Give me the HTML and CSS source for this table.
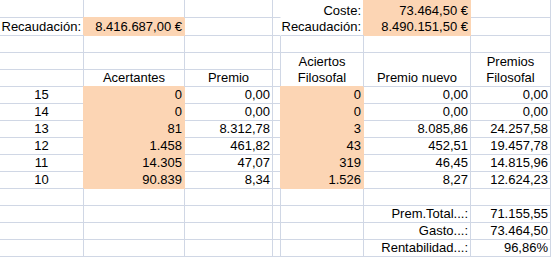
FILE: index.html
```html
<!DOCTYPE html>
<html lang="es">
<head>
<meta charset="utf-8">
<title>Filosofal</title>
<link rel="stylesheet" href="styles.css">
</head>
<body>
<div class="sheet">
  <!-- row 0 -->
  <div class="c top"></div>
  <div class="c top"></div>
  <div class="c top"></div>
  <div class="c top nr"></div>
  <div class="c top r wf nb">Coste:</div>
  <div class="c top r fill">73.464,50 €</div>
  <div class="c top"></div>
  <!-- row 1 -->
  <div class="c r">Recaudación:</div>
  <div class="c r fill">8.416.687,00 €</div>
  <div class="c"></div>
  <div class="c nr"></div>
  <div class="c r wf">Recaudación:</div>
  <div class="c r fill">8.490.151,50 €</div>
  <div class="c"></div>
  <!-- row 2 -->
  <div class="c"></div><div class="c"></div><div class="c"></div><div class="c"></div><div class="c"></div><div class="c"></div><div class="c"></div>
  <!-- row 3/4 -->
  <div class="c"></div>
  <div class="c"></div>
  <div class="c"></div>
  <div class="c"></div>
  <div class="c m span2">Aciertos<br>Filosofal</div>
  <div class="c m span2">Premio nuevo</div>
  <div class="c m span2">Premios<br>Filosofal</div>
  <div class="c"></div>
  <div class="c m">Acertantes</div>
  <div class="c m">Premio</div>
  <div class="c"></div>
  <!-- data rows -->
  <div class="c m">15</div><div class="c r fill">0</div><div class="c r">0,00</div><div class="c"></div><div class="c r fill">0</div><div class="c r">0,00</div><div class="c r">0,00</div>
  <div class="c m">14</div><div class="c r fill">0</div><div class="c r">0,00</div><div class="c"></div><div class="c r fill">0</div><div class="c r">0,00</div><div class="c r">0,00</div>
  <div class="c m">13</div><div class="c r fill">81</div><div class="c r">8.312,78</div><div class="c"></div><div class="c r fill">3</div><div class="c r">8.085,86</div><div class="c r">24.257,58</div>
  <div class="c m">12</div><div class="c r fill">1.458</div><div class="c r">461,82</div><div class="c"></div><div class="c r fill">43</div><div class="c r">452,51</div><div class="c r">19.457,78</div>
  <div class="c m">11</div><div class="c r fill">14.305</div><div class="c r">47,07</div><div class="c"></div><div class="c r fill">319</div><div class="c r">46,45</div><div class="c r">14.815,96</div>
  <div class="c m">10</div><div class="c r fill">90.839</div><div class="c r">8,34</div><div class="c"></div><div class="c r fill">1.526</div><div class="c r">8,27</div><div class="c r">12.624,23</div>
  <!-- row 11 -->
  <div class="c"></div><div class="c"></div><div class="c"></div><div class="c"></div><div class="c"></div><div class="c"></div><div class="c"></div>
  <!-- totals -->
  <div class="c"></div><div class="c"></div><div class="c"></div><div class="c"></div><div class="c"></div><div class="c r">Prem.Total...:</div><div class="c r">71.155,55</div>
  <div class="c"></div><div class="c"></div><div class="c"></div><div class="c"></div><div class="c"></div><div class="c r">Gasto...:</div><div class="c r">73.464,50</div>
  <div class="c"></div><div class="c"></div><div class="c"></div><div class="c"></div><div class="c"></div><div class="c r">Rentabilidad...:</div><div class="c r">96,86%</div>
</div>
</body>
</html>
```

FILE: styles.css
```css
html, body {
  margin: 0;
  padding: 0;
  background: #ffffff;
}

.sheet {
  display: grid;
  grid-template-columns: 84px 101px 88px 8px 83px 107px 80px;
  grid-template-rows: 18px 18px repeat(13, 17px);
  font-family: "Liberation Sans", Arial, sans-serif;
  font-size: 13px;
  color: #000000;
  width: 551px;
}

.c {
  box-sizing: border-box;
  border-right: 1px solid #d0d7e5;
  border-bottom: 1px solid #d0d7e5;
  display: flex;
  align-items: flex-end;
  padding: 0 2px;
  line-height: 16px;
  white-space: nowrap;
  overflow: visible;
  min-width: 0;
}

.top {
  line-height: 13px;
}

.r {
  justify-content: flex-end;
  text-align: right;
}

.m {
  justify-content: center;
  text-align: center;
}

.span2 {
  grid-row: span 2;
}

.fill {
  background: #fcd5b4;
  border-color: #fcd5b4;
  box-shadow: -1px -1px 0 0 #fcd5b4;
}

.wf {
  background: #ffffff;
}

.nr {
  border-right-color: #ffffff;
}

.nb {
  border-bottom-color: #ffffff;
}
```
